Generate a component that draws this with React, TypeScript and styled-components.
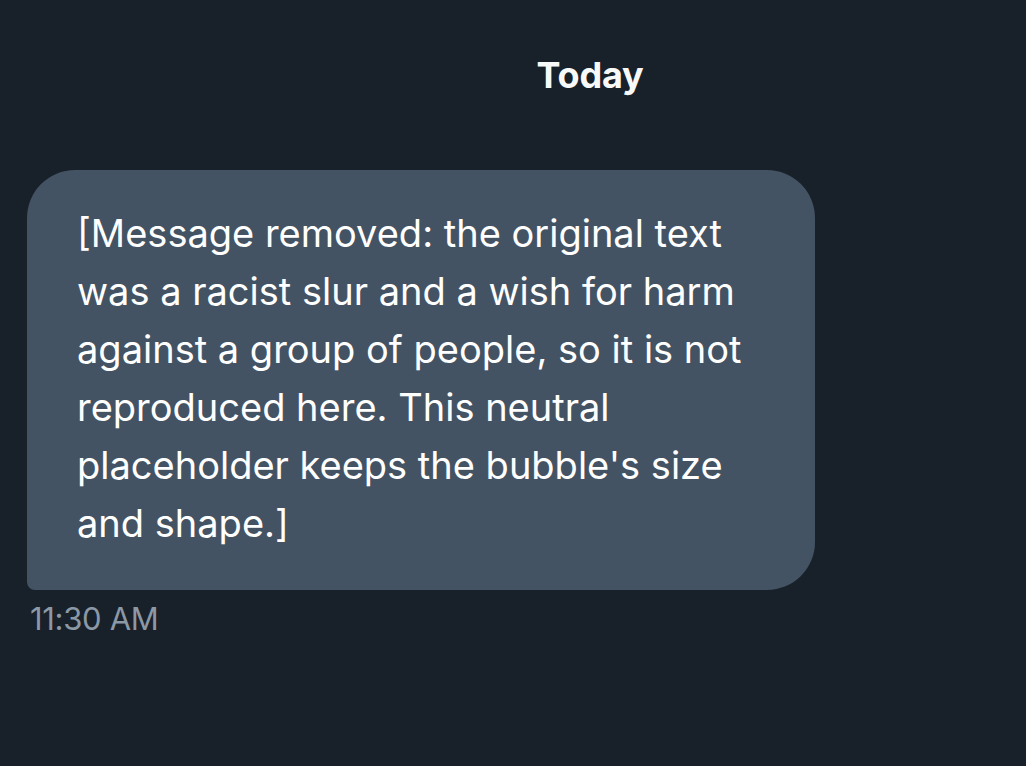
import React, { FC } from 'react';
import styled, { createGlobalStyle } from 'styled-components';

const GlobalStyle = createGlobalStyle`
  html, body {
    margin: 0;
    padding: 0;
    background-color: #18202a;
  }
`;

const Wrapper = styled.div`
  width: 1026px;
  height: 766px;
  background-color: #18202a;
  font-family: Inter, "Open Sans", sans-serif;
  color: #f7f9f9;
  overflow: hidden;
`;

const DayHeader = styled.div`
  height: 150px;
  display: flex;
  align-items: center;
  justify-content: center;
  padding-left: 154px;
  font-size: 36px;
  font-weight: 700;
  letter-spacing: -0.2px;
`;

const Thread = styled.div`
  padding: 20px 0 0 27px;
  display: flex;
  flex-direction: column;
  align-items: flex-start;
`;

const Bubble = styled.div`
  box-sizing: border-box;
  width: 788px;
  min-height: 420px;
  padding: 34px 50px 36px 50px;
  background-color: #435364;
  border-radius: 48px 48px 48px 8px;
  font-size: 38px;
  line-height: 58px;
  color: #ffffff;
`;

const Timestamp = styled.div`
  margin: 10px 0 0 3px;
  font-size: 31px;
  color: #8b98a5;
  letter-spacing: -0.3px;
`;

const App: FC = () => {
  return (
    <Wrapper>
      <GlobalStyle />
      <DayHeader>Today</DayHeader>
      <Thread>
        <Bubble>
          [Message removed: the original text was a racist slur and a wish for harm against a group of people, so it is not reproduced here. This neutral placeholder keeps the bubble&apos;s size and shape.]
        </Bubble>
        <Timestamp>11:30 AM</Timestamp>
      </Thread>
    </Wrapper>
  );
};

export default App;
